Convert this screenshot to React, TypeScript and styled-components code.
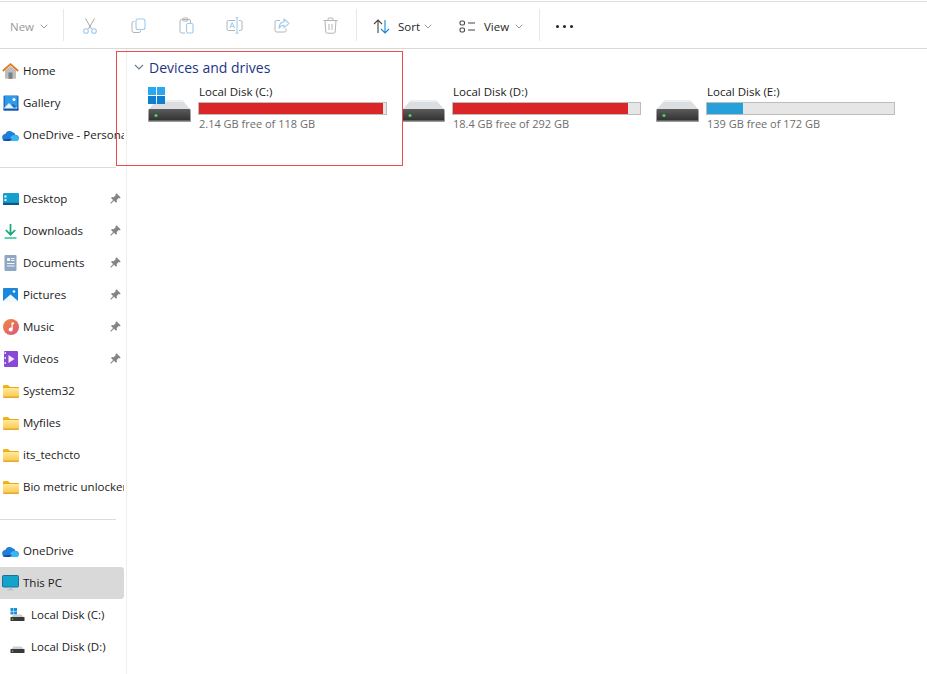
import React from "react";
import styled, { createGlobalStyle } from "styled-components";

const GlobalStyle = createGlobalStyle`
  html, body {
    margin: 0;
    padding: 0;
    background: #ffffff;
    overflow: hidden;
  }
  body {
    font-family: "Open Sans", "Noto Sans", "Liberation Sans", sans-serif;
    font-size: 11.5px;
    color: #1a1a1a;
  }
`;

const Window = styled.div`
  width: 927px;
  height: 674px;
  display: flex;
  flex-direction: column;
  overflow: hidden;
  background: #ffffff;
`;

const Toolbar = styled.div`
  height: 46px;
  margin-top: 1px;
  border-top: 1px solid #dcdcdc;
  border-bottom: 1px solid #d9d9d9;
  display: flex;
  align-items: center;
  flex-shrink: 0;
`;

const Separator = styled.div`
  width: 1px;
  height: 32px;
  background: #e8e8e8;
`;

const NewButton = styled.div`
  width: 63px;
  box-sizing: border-box;
  padding: 2px 0 0 10px;
  display: flex;
  align-items: center;
  gap: 6px;
  color: #9a9a9a;
`;

const IconGroup = styled.div`
  display: flex;
  margin: 0 2px;
`;

const IconButton = styled.div`
  width: 48px;
  height: 32px;
  box-sizing: border-box;
  padding-top: 1px;
  display: flex;
  align-items: center;
  justify-content: center;
`;

const MenuButton = styled.div<{ $width: number; $left: number }>`
  width: ${(p) => p.$width}px;
  box-sizing: border-box;
  padding: 2px 0 0 ${(p) => p.$left}px;
  display: flex;
  align-items: center;
  gap: 8px;
  color: #1f1f1f;
`;

const MenuChevron = styled.span<{ $shift: number }>`
  display: flex;
  margin-left: ${(p) => p.$shift}px;
`;

const Dots = styled.div`
  margin: 2px 0 0 16px;
  display: flex;
  gap: 4px;
  span {
    width: 3px;
    height: 3px;
    border-radius: 50%;
    background: #222;
  }
`;

const Body = styled.div`
  position: relative;
  flex: 1;
  display: flex;
  min-height: 0;
`;

const Sidebar = styled.nav`
  width: 127px;
  box-sizing: border-box;
  border-right: 1px solid #efefef;
  padding-top: 6px;
  flex-shrink: 0;
  overflow: hidden;
`;

const NavRow = styled.div<{ $selected?: boolean; $indent?: boolean }>`
  height: 32px;
  width: 124px;
  box-sizing: border-box;
  padding-left: ${(p) => (p.$indent ? 9 : 2)}px;
  display: flex;
  align-items: center;
  gap: ${(p) => (p.$indent ? 5 : 4)}px;
  background: ${(p) => (p.$selected ? "#d9d9d9" : "transparent")};
  border-radius: 0 3px 3px 0;
  position: relative;
  overflow: hidden;
`;

const NavIcon = styled.span`
  width: 17px;
  height: 17px;
  display: flex;
  align-items: center;
  justify-content: center;
  flex-shrink: 0;
`;

const NavLabel = styled.span`
  white-space: nowrap;
  margin-bottom: 2px;
  color: #1a1a1a;
`;

const PinSlot = styled.span`
  position: absolute;
  left: 110px;
  top: 10px;
  display: flex;
`;

const NavDivider = styled.div`
  height: 1px;
  width: 116px;
  background: #dcdcdc;
  margin: 16px 0 15px;
`;

const Main = styled.main`
  flex: 1;
  padding: 8px 0 0 7px;
`;

const SectionHeader = styled.div`
  display: flex;
  align-items: center;
  gap: 5px;
  height: 20px;
  font-size: 14px;
  color: #1c3583;
`;

const DriveGrid = styled.div`
  display: grid;
  grid-template-columns: repeat(3, 254px);
  margin: 7px 0 0 14px;
`;

const Drive = styled.div`
  display: flex;
  align-items: flex-start;
  gap: 7px;
`;

const DriveIconBox = styled.div`
  width: 43px;
  height: 40px;
  margin-top: 3px;
  flex-shrink: 0;
`;

const DriveInfo = styled.div`
  width: 189px;
  display: flex;
  flex-direction: column;
`;

const DriveName = styled.div`
  height: 15px;
  line-height: 15px;
  padding-left: 1px;
  color: #1a1a1a;
`;

const Bar = styled.div`
  height: 13px;
  margin-top: 3px;
  box-sizing: border-box;
  border: 1px solid #bcbcbc;
  background: #e6e6e6;
`;

const BarFill = styled.div<{ $low: boolean }>`
  height: 100%;
  background: ${(p) => (p.$low ? "#da2626" : "#26a0da")};
`;

const DriveFree = styled.div`
  margin-top: 1px;
  padding-left: 1px;
  font-size: 11px;
  line-height: 15px;
  color: #6d6d6d;
`;

const Highlight = styled.div`
  position: absolute;
  left: 116px;
  top: 2px;
  width: 287px;
  height: 115px;
  box-sizing: border-box;
  border: 1px solid #ee4a50;
  pointer-events: none;
`;

const Chevron = ({ size = 8, color = "#8a8a8a" }: { size?: number; color?: string }) => (
  <svg width={size} height={size * 0.6} viewBox="0 0 10 6" fill="none">
    <path d="M1 1l4 4 4-4" stroke={color} strokeWidth="1.1" />
  </svg>
);

const Cut = () => (
  <svg width="14" height="16" viewBox="0 0 14 16" fill="none">
    <path d="M2.500 .5l6 10.500M11.500 .5l-6 10.500" stroke="#a8a8a8" strokeWidth="1" />
    <circle cx="3" cy="13" r="2.300" stroke="#9ccbf0" strokeWidth="1.100" />
    <circle cx="11" cy="13" r="2.300" stroke="#9ccbf0" strokeWidth="1.100" />
  </svg>
);

const Copy = () => (
  <svg width="15" height="15" viewBox="0 0 15 15" fill="none">
    <path d="M3.500 3.500H2.500a1.500 1.500 0 0 0-1.500 1.500v7.500a2 2 0 0 0 2 2h5a1.500 1.500 0 0 0 1.500-1.500V12.500" stroke="#b4b4b4" strokeWidth="1" />
    <rect x="5" y="1" width="9" height="10.500" rx="2" stroke="#9ccbf0" strokeWidth="1.100" />
  </svg>
);

const Paste = () => (
  <svg width="15" height="17" viewBox="0 0 15 17" fill="none">
    <path d="M6 16H2.500A1.500 1.500 0 0 1 1 14.500V4a1.500 1.500 0 0 1 1.500-1.500H10A1.500 1.500 0 0 1 11.500 4v2" stroke="#b4b4b4" strokeWidth="1" />
    <rect x="3.500" y="1" width="5.500" height="3" rx="1" stroke="#b4b4b4" strokeWidth="1" />
    <rect x="7.500" y="6.500" width="6.500" height="9.500" rx="1.500" stroke="#9ccbf0" strokeWidth="1.100" />
  </svg>
);

const Rename = () => (
  <svg width="17" height="17" viewBox="0 0 17 17" fill="none">
    <path d="M9 3.500H2.500A1.500 1.500 0 0 0 1 5v7a1.500 1.500 0 0 0 1.500 1.500H9M13 3.500h1.500A1.500 1.500 0 0 1 16 5v7a1.500 1.500 0 0 1-1.500 1.500H13" stroke="#b4b4b4" strokeWidth="1" />
    <path d="M11 1v15M9.500 .8h3M9.500 16.200h3" stroke="#9ccbf0" strokeWidth="1.100" />
    <path d="M3.800 11.200L6.200 5.500l2.400 5.700M4.700 9.300h3" stroke="#9ccbf0" strokeWidth="1" />
  </svg>
);

const Share = () => (
  <svg width="16" height="15" viewBox="0 0 16 15" fill="none">
    <path d="M6 2.500H2.500A1.500 1.500 0 0 0 1 4v8.500A1.500 1.500 0 0 0 2.500 14h8a1.500 1.500 0 0 0 1.500-1.500V10.500" stroke="#b4b4b4" strokeWidth="1" />
    <path d="M10 1l5 4.300-5 4.300V7.200c-2.500 0-4 1-5 3 0-4 2-6 5-6.300z" stroke="#9ccbf0" strokeWidth="1.100" strokeLinejoin="round" />
  </svg>
);

const Trash = () => (
  <svg width="15" height="17" viewBox="0 0 15 17" fill="none" stroke="#b4b4b4" strokeWidth="1">
    <path d="M.5 3.500h14M5 3.500V2a1 1 0 0 1 1-1h3a1 1 0 0 1 1 1v1.500" />
    <path d="M2 3.500l.8 11.500a1.500 1.500 0 0 0 1.500 1.200h6.400a1.500 1.500 0 0 0 1.500-1.200L13 3.500" />
    <path d="M6 7v6M9 7v6" />
  </svg>
);

const SortIcon = () => (
  <svg width="17" height="15" viewBox="0 0 17 15" fill="none" strokeWidth="1.100">
    <path d="M5 14V1M1 5l4-4 4 4" stroke="#444" />
    <path d="M12 1v13M8 10l4 4 4-4" stroke="#1a86d8" />
  </svg>
);

const ViewIcon = () => (
  <svg width="17" height="13" viewBox="0 0 17 13" fill="none" stroke="#444" strokeWidth="1.100">
    <rect x="1" y="1" width="4.500" height="4" rx="1.500" />
    <rect x="1" y="8" width="4.500" height="4" rx="1.500" />
    <path d="M9 3h7M9 10h7" />
  </svg>
);

const Pin = () => (
  <svg width="11" height="11" viewBox="0 0 11 11">
    <path d="M6.500 .3l4.200 4.200-1 .8-1-.2-2 2 .2 1.800-.9.900-2.100-2.100L1 10.700 .3 10l2.800-2.900L1 5l.9-.9 1.800.2 2-2-.2-1z" fill="#848484" />
  </svg>
);

const HomeIcon = () => (
  <svg width="17" height="16" viewBox="0 0 17 16">
    <path d="M3 7.500L8.500 3 14 7.500V15a.8.8 0 0 1-.8.8H3.800A.8.8 0 0 1 3 15z" fill="#bdbdbd" />
    <rect x="6.500" y="9.500" width="4" height="6.300" fill="#7f7f7f" />
    <path d="M.8 8L8.500 1.200 16.200 8" fill="none" stroke="#e2761c" strokeWidth="1.800" />
  </svg>
);

const GalleryIcon = () => (
  <svg width="16" height="16" viewBox="0 0 16 16">
    <rect x="0.500" y="0.500" width="15" height="15" rx="1" fill="#1b6fc9" />
    <path d="M2 1h12v11l-4-3-4 3-4 2z" fill="#2e9be6" />
    <circle cx="11" cy="4.500" r="1.500" fill="#fff" />
    <path d="M1 13l5-5 5 5 3-1v2H1z" fill="#e4f3fd" />
    <rect x="0.500" y="13.500" width="15" height="2" fill="#1558a8" />
  </svg>
);

const CloudIcon = () => (
  <svg width="17" height="11" viewBox="0 0 17 11">
    <path d="M4 11a3.500 3.500 0 0 1-.6-7A4.500 4.500 0 0 1 11 2.500 3.300 3.300 0 0 1 13.500 5 3 3 0 0 1 14 11z" fill="#1d7fd8" />
    <path d="M6 11l3-4.500a3 3 0 0 1 3-1.500c2.500 0 4.500 1.500 4.500 3.500S15 11 14 11z" fill="#38b6f5" />
    <path d="M1 9.500c.5 1 1.500 1.500 3 1.500h4l2-2.500z" fill="#114fa8" />
  </svg>
);

const DesktopIcon = () => (
  <svg width="16" height="12" viewBox="0 0 16 12">
    <rect width="16" height="11" rx="1" fill="#14a0cf" />
    <rect x="1.500" y="2.500" width="2" height="2" fill="#fff" />
    <rect x="1.500" y="6" width="2" height="2" fill="#d6f2fa" />
    <rect y="9.800" width="16" height="2.200" fill="#13577f" />
  </svg>
);

const DownloadIcon = () => (
  <svg width="13" height="15" viewBox="0 0 13 15" fill="none">
    <path d="M6.500 0v10M1.800 6l4.700 4.700L11.200 6" stroke="#17a57c" strokeWidth="1.700" />
    <path d="M.5 14h12" stroke="#2cc38f" strokeWidth="1.700" />
  </svg>
);

const DocIcon = () => (
  <svg width="13" height="16" viewBox="0 0 13 16">
    <rect width="12" height="16" rx="1" x="0.500" fill="#8fa7c4" />
    <path d="M3 3h3v3H3zM7 3h3.500v1H7zM7 5h3.500v1H7zM3 8h7.500v1H3zM3 10.500h7.500v1H3z" fill="#f5f8fb" />
  </svg>
);

const PicIcon = () => (
  <svg width="15" height="14" viewBox="0 0 15 14">
    <rect width="15" height="14" rx="1" fill="#1a86dc" />
    <circle cx="11" cy="3.500" r="1.300" fill="#fff" />
    <path d="M0 13l7.500-6.500L15 13v1H0z" fill="#f2f8fd" />
  </svg>
);

const MusicIcon = () => (
  <svg width="16" height="16" viewBox="0 0 16 16">
    <defs>
      <linearGradient id="music-grad" x1="0" y1="0" x2="1" y2="1">
        <stop offset="0" stopColor="#ef8a3c" />
        <stop offset="1" stopColor="#d9567e" />
      </linearGradient>
    </defs>
    <circle cx="8" cy="8" r="8" fill="url(#music-grad)" />
    <path d="M8.500 3.500h2.500v1.800H9.700V10.500A2 2 0 1 1 8.500 8.700z" fill="#fff" />
  </svg>
);

const VideoIcon = () => (
  <svg width="14" height="16" viewBox="0 0 14 16">
    <rect width="14" height="16" rx="1" fill="#8a48d6" />
    <rect x="0.500" y="1" width="1.500" height="2" fill="#e6d5fa" />
    <rect x="0.500" y="6" width="1.500" height="2" fill="#e6d5fa" />
    <rect x="0.500" y="11" width="1.500" height="2" fill="#e6d5fa" />
    <path d="M4.500 4l6 4-6 4z" fill="#f4ecfd" />
  </svg>
);

const FolderIcon = ({ id }: { id: string }) => (
  <svg width="16" height="13" viewBox="0 0 16 13">
    <defs>
      <linearGradient id={id} x1="0" y1="0" x2="0" y2="1">
        <stop offset="0" stopColor="#ffe9a0" />
        <stop offset="1" stopColor="#fbcb52" />
      </linearGradient>
    </defs>
    <path d="M0 1a1 1 0 0 1 1-1h4l1.500 1.500H7V4H0z" fill="#f5b40f" />
    <rect y="2" width="16" height="11" rx="1" fill="#e8a92a" />
    <path d="M0 4a1 1 0 0 1 1-1h14a1 1 0 0 1 1 1v7.500H0z" fill={`url(#${id})`} />
  </svg>
);

const MonitorIcon = () => (
  <svg width="17" height="16" viewBox="0 0 17 16">
    <rect x="0.500" y="0.500" width="16" height="11.500" rx="1" fill="#14a3cb" stroke="#1f6f99" />
    <rect x="7.500" y="12" width="2" height="2.500" fill="#9eb0bc" />
    <rect x="5" y="14.500" width="7" height="1" fill="#b6c3cc" />
  </svg>
);

const TinyDrive = ({ windows }: { windows?: boolean }) => (
  <svg width="15" height="15" viewBox="0 0 15 15">
    {windows && (
      <g fill="#1c8fdc">
        <rect x="0.500" y="0" width="3" height="3" />
        <rect x="4" y="0" width="3" height="3" />
        <rect x="0.500" y="3.500" width="3" height="3" />
        <rect x="4" y="3.500" width="3" height="3" />
      </g>
    )}
    <path d="M1.500 9l2-2.500h8l2 2.500z" fill="#cfcfcf" />
    <rect x="0.500" y="9" width="14" height="4" rx=".5" fill="#3a3a3a" />
    <rect x="2" y="10.500" width="1.200" height="1.200" fill="#5bea5b" />
  </svg>
);

const DriveIcon = ({ windows }: { windows?: boolean }) => (
  <svg width="43" height="40" viewBox="0 0 43 40" style={{ display: "block" }}>
    <defs>
      <linearGradient id={windows ? "drive-c" : "drive-x"} x1="0" y1="0" x2="0" y2="1">
        <stop offset="0" stopColor="#5c5c5c" />
        <stop offset="1" stopColor="#2c2c2c" />
      </linearGradient>
    </defs>
    <path d="M9 13h25l8.500 9.500H.5z" fill="#dcdfe1" />
    <path d="M9 13h25l1 2H8z" fill="#eceef0" />
    <rect x="0.500" y="22" width="42" height="13" rx="1" fill={`url(#${windows ? "drive-c" : "drive-x"})`} />
    <rect x="0.500" y="33.500" width="42" height="1.500" fill="#9a9a9a" />
    <rect x="6.500" y="27" width="3" height="3" rx="1.500" fill="#3fe04a" />
    {windows && (
      <g>
        <rect x="0" y="0" width="8" height="8" fill="#2aa7ee" />
        <rect x="9" y="0" width="8" height="8" fill="#2aa7ee" />
        <rect x="0" y="9" width="8" height="8" fill="#0f7fd0" />
        <rect x="9" y="9" width="8" height="8" fill="#0f7fd0" />
      </g>
    )}
  </svg>
);

const quickAccess = [
  { label: "Desktop", icon: <DesktopIcon /> },
  { label: "Downloads", icon: <DownloadIcon /> },
  { label: "Documents", icon: <DocIcon /> },
  { label: "Pictures", icon: <PicIcon /> },
  { label: "Music", icon: <MusicIcon /> },
  { label: "Videos", icon: <VideoIcon /> },
];

const folders = ["System32", "Myfiles", "its_techcto", "Bio metric unlocker"];

const drives = [
  { name: "Local Disk (C:)", free: "2.14 GB free of 118 GB", used: 98.2, low: true, windows: true },
  { name: "Local Disk (D:)", free: "18.4 GB free of 292 GB", used: 93.7, low: true },
  { name: "Local Disk (E:)", free: "139 GB free of 172 GB", used: 19.2, low: false },
];

export default function App() {
  return (
    <Window>
      <GlobalStyle />
      <Toolbar>
        <NewButton>
          New <Chevron />
        </NewButton>
        <Separator />
        <IconGroup>
          <IconButton><Cut /></IconButton>
          <IconButton><Copy /></IconButton>
          <IconButton><Paste /></IconButton>
          <IconButton><Rename /></IconButton>
          <IconButton><Share /></IconButton>
          <IconButton><Trash /></IconButton>
        </IconGroup>
        <Separator />
        <MenuButton $width={86} $left={16}>
          <SortIcon /> Sort <MenuChevron $shift={-4}><Chevron /></MenuChevron>
        </MenuButton>
        <MenuButton $width={96} $left={16}>
          <ViewIcon /> View <MenuChevron $shift={-2}><Chevron /></MenuChevron>
        </MenuButton>
        <Separator />
        <Dots><span /><span /><span /></Dots>
      </Toolbar>
      <Body>
        <Sidebar>
          <NavRow><NavIcon><HomeIcon /></NavIcon><NavLabel>Home</NavLabel></NavRow>
          <NavRow><NavIcon><GalleryIcon /></NavIcon><NavLabel>Gallery</NavLabel></NavRow>
          <NavRow><NavIcon><CloudIcon /></NavIcon><NavLabel>OneDrive - Personal</NavLabel></NavRow>
          <NavDivider />
          {quickAccess.map((item) => (
            <NavRow key={item.label}>
              <NavIcon>{item.icon}</NavIcon>
              <NavLabel>{item.label}</NavLabel>
              <PinSlot><Pin /></PinSlot>
            </NavRow>
          ))}
          {folders.map((name, i) => (
            <NavRow key={name}>
              <NavIcon><FolderIcon id={`folder-${i}`} /></NavIcon>
              <NavLabel>{name}</NavLabel>
            </NavRow>
          ))}
          <NavDivider />
          <NavRow><NavIcon><CloudIcon /></NavIcon><NavLabel>OneDrive</NavLabel></NavRow>
          <NavRow $selected><NavIcon><MonitorIcon /></NavIcon><NavLabel>This PC</NavLabel></NavRow>
          <NavRow $indent><NavIcon><TinyDrive windows /></NavIcon><NavLabel>Local Disk (C:)</NavLabel></NavRow>
          <NavRow $indent><NavIcon><TinyDrive /></NavIcon><NavLabel>Local Disk (D:)</NavLabel></NavRow>
        </Sidebar>
        <Main>
          <SectionHeader>
            <Chevron size={10} color="#6f7b8f" />
            Devices and drives
          </SectionHeader>
          <DriveGrid>
            {drives.map((d) => (
              <Drive key={d.name}>
                <DriveIconBox><DriveIcon windows={d.windows} /></DriveIconBox>
                <DriveInfo>
                  <DriveName>{d.name}</DriveName>
                  <Bar>
                    <BarFill $low={d.low} style={{ width: `${d.used}%` }} />
                  </Bar>
                  <DriveFree>{d.free}</DriveFree>
                </DriveInfo>
              </Drive>
            ))}
          </DriveGrid>
        </Main>
        <Highlight />
      </Body>
    </Window>
  );
}
